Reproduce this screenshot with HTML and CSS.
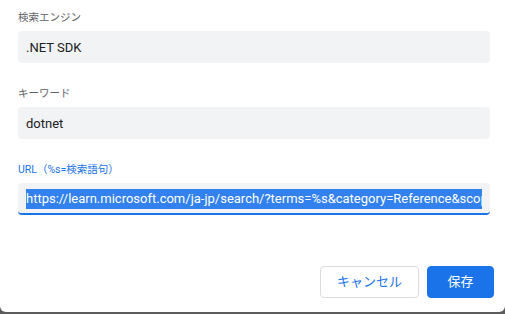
FILE: index.html
```html
<!DOCTYPE html>
<html lang="ja">
    <head>
        <title>検索エンジンを編集</title>
        <link rel="stylesheet" href="styles.css">
    </head>
    <body>
        <div class="dialog">
            <div class="field">
                <div class="label">検索エンジン</div>
                <div class="input"><div class="value">.NET SDK</div></div>
            </div>
            <div class="field">
                <div class="label">キーワード</div>
                <div class="input"><div class="value">dotnet</div></div>
            </div>
            <div class="field focused">
                <div class="label">URL（%s=検索語句）</div>
                <div class="input">
                    <div class="value"><span class="selected">https://learn.microsoft.com/ja-jp/search/?terms=%s&amp;category=Reference&amp;scope=.NET</span></div>
                </div>
            </div>
            <div class="buttons">
                <div class="cancel button">キャンセル</div>
                <div class="save button">保存</div>
            </div>
        </div>
    </body>
</html>
```

FILE: styles.css
```css
body {
    margin: 0;
    background: #5c5c5c;
    font-family: Roboto, "Noto Sans CJK JP", sans-serif;
}
.dialog {
    height: 312px;
    box-sizing: border-box;
    background: #fff;
    border-radius: 0 0 6px 6px;
    padding: 10px 15px 0 18px;
    display: flex;
    flex-direction: column;
}
.field {
    margin-bottom: 23px;
}
.label {
    font-size: 10.5px;
    line-height: 16px;
    color: #5f6368;
    margin-bottom: 5px;
}
.focused .label {
    color: #1a73e8;
}
.input {
    height: 32px;
    box-sizing: border-box;
    background: #f1f3f4;
    border-radius: 4px;
    padding: 0 8px;
    display: flex;
    align-items: center;
    font-size: 13px;
    color: #202124;
}
.focused .input {
    border-bottom: 2px solid #1a73e8;
    padding-top: 2px;
}
.value {
    overflow: hidden;
    white-space: nowrap;
    width: 100%;
}
.selected {
    display: inline-block;
    line-height: 20px;
    background: #3281ee;
    color: #fff;
}
.buttons {
    display: flex;
    justify-content: flex-end;
    gap: 8px;
    margin-top: 28px;
    margin-right: -4px;
}
.button {
    height: 32px;
    box-sizing: border-box;
    border: 1px solid #dadce0;
    border-radius: 4px;
    font-size: 13px;
    line-height: 30px;
    cursor: pointer;
    user-select: none;
}
.cancel {
    color: #1a73e8;
    padding: 0 16px;
}
.save {
    background: #1a73e8;
    border-color: #1a73e8;
    color: #fff;
    padding: 0 19.5px;
}
```
